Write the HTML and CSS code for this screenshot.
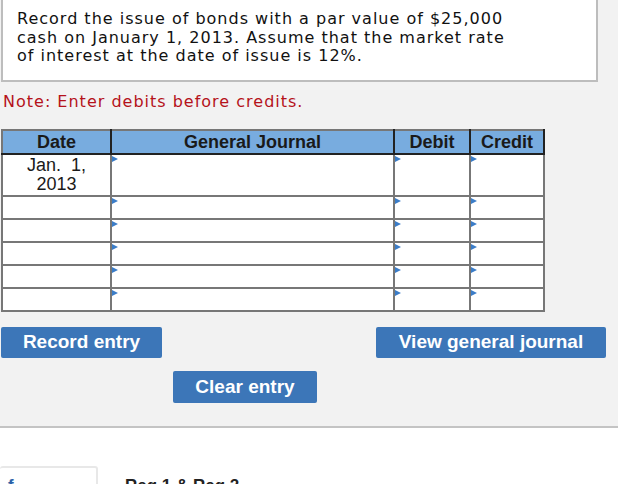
FILE: index.html
```html
<!DOCTYPE html>
<html>
<head>
<meta charset="utf-8">
<link rel="stylesheet" href="styles.css">
</head>
<body>
<div class="top">
  <div class="prompt">Record the issue of bonds with a par value of $25,000 cash on January 1, 2013. Assume that the market rate of interest at the date of issue is 12%.</div>
  <div class="note">Note: Enter debits before credits.</div>
  <table class="journal">
    <thead>
      <tr><th class="c-date">Date</th><th class="c-gj">General Journal</th><th class="c-dr">Debit</th><th class="c-cr">Credit</th></tr>
    </thead>
    <tbody>
      <tr class="tall"><td class="date">Jan. &nbsp;1,<br>2013</td><td class="inp"><span class="tri"></span></td><td class="inp"><span class="tri"></span></td><td class="inp"><span class="tri"></span></td></tr>
      <tr><td></td><td class="inp"><span class="tri"></span></td><td class="inp"><span class="tri"></span></td><td class="inp"><span class="tri"></span></td></tr>
      <tr><td></td><td class="inp"><span class="tri"></span></td><td class="inp"><span class="tri"></span></td><td class="inp"><span class="tri"></span></td></tr>
      <tr><td></td><td class="inp"><span class="tri"></span></td><td class="inp"><span class="tri"></span></td><td class="inp"><span class="tri"></span></td></tr>
      <tr><td></td><td class="inp"><span class="tri"></span></td><td class="inp"><span class="tri"></span></td><td class="inp"><span class="tri"></span></td></tr>
      <tr><td></td><td class="inp"><span class="tri"></span></td><td class="inp"><span class="tri"></span></td><td class="inp"><span class="tri"></span></td></tr>
    </tbody>
  </table>
  <div class="btnrow">
    <button class="btn b-record">Record entry</button>
    <button class="btn b-view">View general journal</button>
  </div>
  <div class="btnrow2">
    <button class="btn b-clear">Clear entry</button>
  </div>
</div>
<div class="bottom">
  <div class="tab">f</div>
  <div class="tablabel">Req 1 &amp; Req 2</div>
</div>
</body>
</html>
```
FILE: styles.css
```css
html, body {
  margin: 0;
  padding: 0;
}
body {
  background: #ffffff;
  width: 618px;
  height: 484px;
  overflow: hidden;
}
.top {
  background: #f2f2f2;
  height: 426px;
  border-bottom: 2px solid #c4c4c4;
  padding-left: 1px;
}
.prompt {
  width: 495px;
  background: #ffffff;
  border: 2px solid #bdbdbd;
  border-top: none;
  padding: 10px 84px 14px 14px;
  font-family: "DejaVu Sans", Verdana, sans-serif;
  font-size: 16px;
  letter-spacing: 1px;
  line-height: 18.5px;
  color: #111;
}
.note {
  margin: 10px 0 0 2px;
  font-family: "DejaVu Sans", Verdana, sans-serif;
  font-size: 16px;
  letter-spacing: 1px;
  line-height: 20px;
  color: #b5121b;
}
.journal {
  margin-top: 17px;
  border-collapse: collapse;
  table-layout: fixed;
  border: 2px solid #777;
  font-family: "Liberation Sans", Arial, sans-serif;
  font-size: 18px;
  background: #fff;
}
.journal th {
  background: #78acdf;
  color: #1a1a1a;
  font-weight: bold;
  height: 22px;
  padding: 0;
  border-right: 2px solid #222;
  border-bottom: 2px solid #222;
  border-top: 2px solid #777;
  line-height: 22px;
}
.journal th.c-date { width: 107px; }
.journal th.c-gj { width: 281px; }
.journal th.c-dr { width: 74px; }
.journal th.c-cr { width: 72px; }
.journal td {
  border: 2px solid #777;
  height: 21px;
  padding: 0;
  position: relative;
  vertical-align: top;
}
.journal tr.tall td {
  height: 39px;
}
.journal td.date {
  text-align: center;
  color: #1a1a1a;
  line-height: 19px;
  padding-top: 1px;
  height: 38px;
}
.tri {
  position: absolute;
  left: 0;
  top: 1px;
  width: 0;
  height: 0;
  border-top: 3.5px solid transparent;
  border-bottom: 3.5px solid transparent;
  border-left: 6px solid #3b7dc8;
}
.btnrow {
  display: flex;
  justify-content: space-between;
  width: 605px;
  margin-top: 15px;
}
.btnrow2 {
  margin-top: 13px;
  padding-left: 172px;
}
.btn {
  background: #3c76b8;
  color: #fff;
  border: none;
  border-radius: 2px;
  font-family: "Liberation Sans", Arial, sans-serif;
  font-weight: bold;
  font-size: 19px;
  height: 31px;
  padding: 0;
  margin: 0;
}
.b-record { width: 161px; }
.b-view { width: 230px; }
.b-clear { width: 144px; height: 32px; }
.bottom {
  display: flex;
  align-items: flex-start;
  padding-top: 38px;
}
.tab {
  width: 88px;
  height: 30px;
  border: 2px solid #e8e8e8;
  border-radius: 3px;
  border-left: none;
  padding: 8px 0 0 8px;
  font-family: "Liberation Sans", Arial, sans-serif;
  font-weight: bold;
  font-size: 17px;
  color: #2b62a8;
  line-height: 20px;
}
.tablabel {
  margin-left: 27px;
  margin-top: 10px;
  font-family: "Liberation Sans", Arial, sans-serif;
  font-weight: bold;
  font-size: 17px;
  line-height: 20px;
  color: #222;
}
```
